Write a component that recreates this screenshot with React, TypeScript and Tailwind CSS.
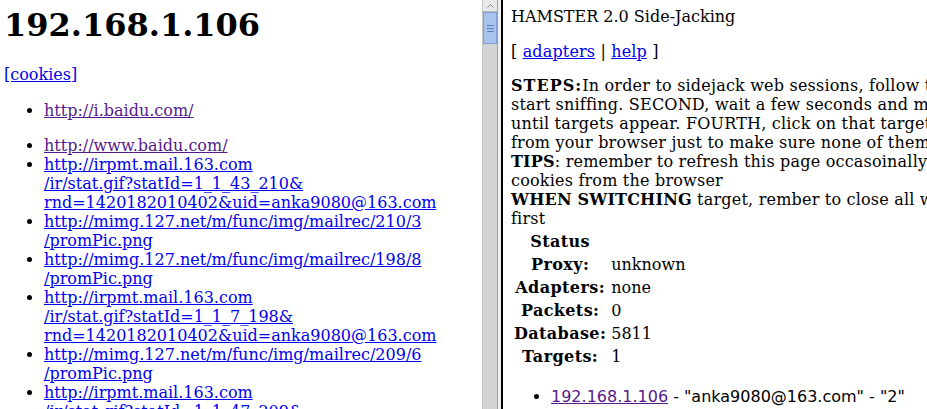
export default function App() {
  const blue = "text-[#0000ee] underline";
  const purple = "text-[#551a8b] underline";
  const th = "text-center font-bold px-[1px] tracking-[0.4px]";
  return (
    <div className="flex h-[409px] w-[927px] overflow-hidden bg-white text-black font-['DejaVu_Serif',serif] text-[16px] leading-[19px]">
      {/* left frame */}
      <div className="w-[482px] shrink-0 overflow-hidden pl-[4px]">
        <h1 className="mt-[7px] mb-[21px] text-[32px] leading-[37px] font-bold">192.168.1.106</h1>
        <a className={blue}>[cookies]</a>
        <ul className="mt-[17px] list-disc pl-[40px]">
          <li>
            <a className={purple}>http://i.baidu.com/</a>
          </li>
        </ul>
        <ul className="mt-[16px] list-disc pl-[40px] whitespace-nowrap">
          <li>
            <a className={purple}>http://www.baidu.com/</a>
          </li>
          <li>
            <a className={blue}>
              http://irpmt.mail.163.com
              <br />
              /ir/stat.gif?statId=1_1_43_210&amp;
              <br />
              rnd=1420182010402&amp;uid=anka9080@163.com
            </a>
          </li>
          <li>
            <a className={blue}>
              http://mimg.127.net/m/func/img/mailrec/210/3
              <br />
              /promPic.png
            </a>
          </li>
          <li>
            <a className={blue}>
              http://mimg.127.net/m/func/img/mailrec/198/8
              <br />
              /promPic.png
            </a>
          </li>
          <li>
            <a className={blue}>
              http://irpmt.mail.163.com
              <br />
              /ir/stat.gif?statId=1_1_7_198&amp;
              <br />
              rnd=1420182010402&amp;uid=anka9080@163.com
            </a>
          </li>
          <li>
            <a className={blue}>
              http://mimg.127.net/m/func/img/mailrec/209/6
              <br />
              /promPic.png
            </a>
          </li>
          <li>
            <a className={blue}>
              http://irpmt.mail.163.com
              <br />
              /ir/stat.gif?statId=1_1_47_209&amp;
              <br />
              rnd=1420182010402&amp;uid=anka9080@163.com
            </a>
          </li>
        </ul>
      </div>

      {/* scrollbar */}
      <div className="flex w-[15px] shrink-0 flex-col bg-[#d4d4d4] border-l border-[#c6c6c6]">
        <div className="flex h-[12px] items-center justify-center bg-[#e8e8e8] border-b border-[#b8b8b8]">
          <svg width="7" height="4" viewBox="0 0 7 4">
            <path d="M0.5 3.5 L3.5 0.5 L6.5 3.5" fill="none" stroke="#8a8a8a" strokeWidth="1" />
          </svg>
        </div>
        <div className="flex h-[32px] flex-col items-center justify-center gap-[2px] bg-[#a9c3ec] border border-[#7d9fd6]">
          <div className="h-[1px] w-[7px] bg-[#5a7fbf]" />
          <div className="h-[1px] w-[7px] bg-[#5a7fbf]" />
          <div className="h-[1px] w-[7px] bg-[#5a7fbf]" />
        </div>
        <div className="flex-1" />
      </div>

      {/* frame border */}
      <div className="flex w-[6px] shrink-0">
        <div className="w-[1px] bg-[#a0a0a0]" />
        <div className="w-[3px] bg-[#f0f0f0]" />
        <div className="w-[2px] bg-black" />
      </div>

      {/* right frame */}
      <div className="flex-1 overflow-hidden pl-[8px] pt-[7px] whitespace-nowrap">
        <div>HAMSTER 2.0 Side-Jacking</div>
        <p className="mt-[16px] tracking-[0.15px]">
          [ <a className={blue}>adapters</a> | <a className={blue}>help</a> ]
        </p>
        <div className="mt-[15px] tracking-[0.2px]">
          <div>
            <b className="tracking-[1px]">STEPS:</b>In order to sidejack web sessions, follow these steps. FIRST, click on the adapters menu and
          </div>
          <div>start sniffing. SECOND, wait a few seconds and make sure packets are being received. THIRD, wait</div>
          <div>until targets appear. FOURTH, click on that target to start sidejacking. FIFTH, clear all cookies</div>
          <div>from your browser just to make sure none of them interfere.</div>
          <div>
            <b>TIPS</b>: remember to refresh this page occasoinally to see new targets, and to clear
          </div>
          <div>cookies from the browser</div>
          <div>
            <b>WHEN SWITCHING</b> target, rember to close all windows in your browser and clear the cookies
          </div>
          <div>first</div>
        </div>
        <table className="mt-[1px] border-separate border-spacing-[2px]">
          <tbody>
            <tr className="h-[21px]">
              <th className={th}>Status</th>
              <td></td>
            </tr>
            <tr className="h-[21px]">
              <th className={th}>Proxy:</th>
              <td className="pl-[2px]">unknown</td>
            </tr>
            <tr className="h-[21px]">
              <th className={th}>Adapters:</th>
              <td className="pl-[2px]">none</td>
            </tr>
            <tr className="h-[21px]">
              <th className={th}>Packets:</th>
              <td className="pl-[2px]">0</td>
            </tr>
            <tr className="h-[21px]">
              <th className={th}>Database:</th>
              <td className="pl-[2px]">5811</td>
            </tr>
            <tr className="h-[21px]">
              <th className={th}>Targets:</th>
              <td className="pl-[2px]">1</td>
            </tr>
          </tbody>
        </table>
        <ul className="mt-[18px] list-disc pl-[40px] font-['DejaVu_Sans',sans-serif]">
          <li>
            <a className={purple}>192.168.1.106</a> - "anka9080@163.com" - "2"
          </li>
        </ul>
      </div>
    </div>
  );
}
